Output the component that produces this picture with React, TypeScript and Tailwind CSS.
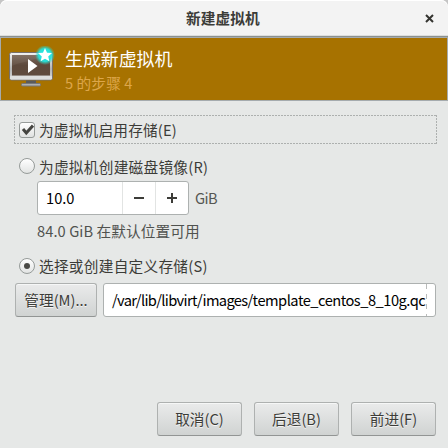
import type { ReactNode } from 'react';

const cjk = "font-['Noto_Sans_CJK_SC',sans-serif]";

function Monitor() {
  return (
    <svg width="48" height="48" viewBox="0 0 48 48" className="shrink-0">
      <defs>
        <linearGradient id="frame" x1="0" y1="0" x2="0" y2="1">
          <stop offset="0" stopColor="#f4f4f4" />
          <stop offset=".6" stopColor="#b4b4b4" />
          <stop offset="1" stopColor="#d8d8d8" />
        </linearGradient>
        <linearGradient id="screen" x1="0" y1="0" x2="0" y2="1">
          <stop offset="0" stopColor="#7b685c" />
          <stop offset=".5" stopColor="#5d493d" />
          <stop offset="1" stopColor="#604a3d" />
        </linearGradient>
        <radialGradient id="glow">
          <stop offset="0" stopColor="#20f4f4" />
          <stop offset=".65" stopColor="#25e2dc" stopOpacity=".95" />
          <stop offset="1" stopColor="#38c8b0" stopOpacity="0" />
        </radialGradient>
      </defs>
      <rect x="1.500" y="6.500" width="43" height="27.500" rx="2" fill="url(#frame)" stroke="#77706c" />
      <rect x="4" y="9" width="38" height="20.500" fill="url(#screen)" />
      <path d="M4 9h32C27 15 15 15 4 20z" fill="#fff" opacity=".06" />
      <rect x="2" y="30" width="42" height="3.500" rx="1" fill="#dedede" />
      <path d="M18 34.500h10v3H18z" fill="#5a5a5a" />
      <rect x="13.500" y="37.500" width="19" height="2.500" rx="1" fill="#aeb0b0" stroke="#777" />
      <path d="M20 13v14l9.500-7z" fill="#fff" />
      <circle cx="37" cy="9" r="10" fill="url(#glow)" />
      <path d="M37 2l2 4.700 5 .4-3.800 3.300 1.200 4.900L37 12.700l-4.400 2.600 1.200-4.900L30 7.100l5-.4z" fill="#fff" />
    </svg>
  );
}

function Button({ children, className }: { children: ReactNode; className: string }) {
  return (
    <button
      className={`flex h-[34px] items-center justify-center rounded-[3px] border border-[#aeb1b0] border-b-[#929594] bg-linear-to-b from-[#eaebeb] to-[#d0d3d2] text-[14.67px] leading-5 whitespace-nowrap shadow-[inset_0_1px_0_#f6f7f7] [text-shadow:0_1px_0_#f5f5f5] ${className}`}
    >
      {children}
    </button>
  );
}

function Radio({ checked, children }: { checked?: boolean; children: ReactNode }) {
  return (
    <label className="ml-[19px] flex h-5 items-center gap-1 whitespace-nowrap">
      <span className="flex size-4 items-center justify-center rounded-full border border-[#969b99] bg-linear-to-b from-white to-[#e2e4e3]">
        {checked && <span className="size-1.5 rounded-full bg-[#4a4a46]" />}
      </span>
      <span className={checked ? 'tracking-[0.27px]' : 'pt-0.5 tracking-[0.27px]'}>{children}</span>
    </label>
  );
}

export default function App() {
  return (
    <div className="h-[448px] w-[448px] overflow-hidden bg-[#c5c5c5]">
      <div className={`flex h-full flex-col rounded-t-[7px] bg-[#e6e8e7] text-[14.67px] leading-5 text-[#3c3c38] ${cjk}`}>
        <header className="grid h-[37px] shrink-0 grid-cols-[1fr_auto_1fr] items-center rounded-t-[7px] border-b border-[#8b908f] bg-[#f3f3f3] shadow-[inset_0_1px_0_#fff,inset_0_-1px_0_#dcdedd]">
          <span />
          <h1 className="mr-0.5 font-bold tracking-[0.1px]">新建虚拟机</h1>
          <svg width="9" height="9" viewBox="0 0 9 9" className="mr-[14px] justify-self-end">
            <path d="M1 1l7 7M8 1l-7 7" stroke="#343430" strokeWidth="2" />
          </svg>
        </header>
        <section className="flex h-16 shrink-0 items-start border border-[#a5abae] bg-[#a77200] pt-2 pl-[7px]">
          <Monitor />
          <div className="ml-[9px] whitespace-nowrap">
            <h2 className="text-[17.9px] leading-6 font-normal text-white">生成新虚拟机</h2>
            <p className="mt-[3px] text-[14.67px] leading-5 tracking-[0.1px] text-[#dda64a]">5 的步骤 4</p>
          </div>
        </section>
        <main className="flex grow flex-col items-start">
          <label className="mt-[14px] ml-[14px] flex h-[29px] w-[423px] items-center gap-1 bg-[repeating-linear-gradient(90deg,#adb0af_0_2px,transparent_2px_3px),repeating-linear-gradient(90deg,#adb0af_0_2px,transparent_2px_3px),repeating-linear-gradient(#adb0af_0_2px,transparent_2px_3px),repeating-linear-gradient(#adb0af_0_2px,transparent_2px_3px)] bg-[length:100%_1px,100%_1px,1px_100%,1px_100%] bg-[position:top,bottom,left,right] bg-no-repeat pl-[5px]">
            <span className="flex size-4 items-center justify-center rounded-[3px] border border-[#969b99] bg-linear-to-b from-white to-[#e0e2e1]">
              <svg width="14" height="14" viewBox="0 0 14 14" className="shrink-0">
                <path d="M3 6l3.300 4L13 2.500" fill="none" stroke="#454541" strokeWidth="3" />
              </svg>
            </span>
            <span className="tracking-[0.2px]">为虚拟机启用存储(E)</span>
          </label>
          <div className="mt-3">
            <Radio>为虚拟机创建磁盘镜像(R)</Radio>
          </div>
          <div className="mt-[5px] ml-[37px] flex items-center">
            <div className="flex h-[34px] w-[152px] items-center rounded-[3px] border border-[#adb1b0] bg-white">
              <span className="w-[84px] pl-2 text-black">10.0</span>
              <span className="flex h-full w-[33px] items-center justify-center border-l border-[#e2e4e3]">
                <span className="h-0.5 w-2.5 bg-[#3c3c38]" />
              </span>
              <span className="flex h-full w-[33px] items-center justify-center border-l border-[#e2e4e3]">
                <svg width="10" height="10" viewBox="0 0 10 10">
                  <path d="M0 5h10M5 0v10" stroke="#3c3c38" strokeWidth="2" />
                </svg>
              </span>
            </div>
            <span className="ml-1.5 tracking-[-0.6px] text-[#555753]">GiB</span>
          </div>
          <p className="mt-[6px] mb-px ml-[37px] h-5 whitespace-nowrap tracking-[0.08px] text-[#50524f]">84.0 GiB 在默认位置可用</p>
          <div className="mt-[14px]">
            <Radio checked>选择或创建自定义存储(S)</Radio>
          </div>
          <div className="mt-[7px] ml-[15px] flex gap-1.5">
            <Button className="w-[82px]">管理(M)...</Button>
            <div className="flex h-[34px] w-[333px] items-center rounded-[3px] border border-[#adb1b0] bg-white pl-2 text-black">
              <span className="w-[314px] shrink-0 whitespace-nowrap">
                <span className="tracking-[-0.65px]">/var/lib/libvirt/images/</span>
                <span className="tracking-[-0.5px]">template_centos_8_10g.qc</span>
              </span>
              <span className="h-8 w-px bg-[repeating-linear-gradient(#b9bbba_0_5px,transparent_5px_10px)]" />
            </div>
          </div>
          <footer className="mt-[85px] ml-[157px] flex gap-3">
            <Button className="w-[85px]">取消(C)</Button>
            <Button className="w-[85px]">后退(B)</Button>
            <Button className="w-[85px]">前进(F)</Button>
          </footer>
        </main>
      </div>
    </div>
  );
}
